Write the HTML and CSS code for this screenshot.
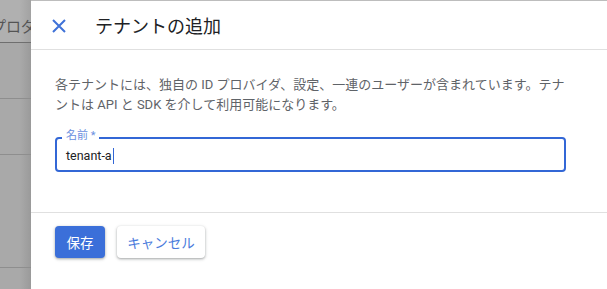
FILE: index.html
```html
<!DOCTYPE html>
<html lang="ja">
<head>
<meta charset="utf-8">
<link rel="stylesheet" href="styles.css">
</head>
<body>
<div class="page">
  <div class="backdrop">
    <div class="bg-head"><span class="bg-title">プロダ</span></div>
    <div class="bg-row"></div>
    <div class="bg-row"></div>
    <div class="bg-row tall"></div>
  </div>
  <div class="panel">
    <header class="panel-head">
      <button class="close" aria-label="閉じる">
        <svg width="14" height="14" viewBox="0 0 14 14"><path d="M1 1L13 13M13 1L1 13" stroke="#3f72d8" stroke-width="2" fill="none"/></svg>
      </button>
      <h1 class="title">テナントの追加</h1>
    </header>
    <div class="panel-body">
      <p class="desc">各テナントには、独自の ID プロバイダ、設定、一連のユーザーが含まれています。テナントは API と SDK を介して利用可能になります。</p>
      <div class="field">
        <span class="label">名前 *</span>
        <div class="input">tenant-a<span class="caret"></span></div>
      </div>
    </div>
    <footer class="panel-foot">
      <button class="btn primary">保存</button>
      <button class="btn secondary">キャンセル</button>
    </footer>
  </div>
</div>
</body>
</html>
```
FILE: styles.css
```css
* { box-sizing: border-box; }
html, body { margin: 0; padding: 0; background: #fff; }
body {
  font-family: Roboto, "Noto Sans CJK JP", sans-serif;
  width: 607px;
  height: 289px;
  overflow: hidden;
}
.page { display: flex; height: 289px; }
.backdrop {
  width: 31px;
  flex: none;
  background: linear-gradient(to right, #a9a9a9 0, #a9a9a9 20px, #9a9a9a 31px);
  display: flex;
  flex-direction: column;
  overflow: hidden;
}
.bg-head {
  height: 43px;
  border-bottom: 1px solid #6f6f6f;
  background: linear-gradient(to right, #b0b0b0 0, #b0b0b0 20px, #a2a2a2 31px);
  padding-top: 15px;
  white-space: nowrap;
}
.bg-title {
  font-size: 15px;
  color: #545454;
  margin-left: -9px;
}
.bg-row { height: 56px; border-bottom: 1px solid #8e8e8e; }
.bg-row.tall { height: 113px; }
.panel {
  flex: 1;
  background: #fff;
  display: flex;
  flex-direction: column;
  border-top: 1px solid #bdbdbd;
}
.panel-head {
  height: 49px;
  border-bottom: 1px solid #e0e0e0;
  display: flex;
  align-items: center;
  padding-left: 20px;
}
.close {
  background: none;
  border: 0;
  padding: 0;
  width: 16px;
  height: 16px;
  display: flex;
  align-items: center;
  justify-content: center;
  margin-top: 1px;
}
.title {
  margin: 0 0 0 28px;
  font-size: 18px;
  font-weight: 400;
  color: #202124;
}
.panel-body {
  height: 163px;
  border-bottom: 1px solid #e0e0e0;
  padding: 25px 40px 0 24px;
}
.desc {
  margin: 0;
  font-size: 13px;
  line-height: 20px;
  color: #5f6368;
}
.field { position: relative; margin-top: 22px; width: 511px; }
.label {
  position: absolute;
  left: 7px;
  top: -8px;
  background: #fff;
  padding: 0 4px;
  font-size: 11px;
  line-height: 14px;
  color: #6b90e0;
}
.input {
  height: 35px;
  border: 2px solid #3367d6;
  border-radius: 4px;
  padding: 2px 9px 0;
  font-size: 12.5px;
  line-height: 20px;
  color: #202124;
  display: flex;
  align-items: center;
}
.caret {
  display: inline-block;
  width: 1px;
  height: 16px;
  background: #3367d6;
  margin-left: 1px;
}
.panel-foot {
  display: flex;
  gap: 12px;
  padding: 13px 24px 0;
}
.btn {
  height: 32px;
  border: 0;
  border-radius: 4px;
  font-family: inherit;
  font-size: 13.5px;
  padding: 0;
  white-space: nowrap;
  box-shadow: 0 1px 2px rgba(60,64,67,.3), 0 1px 3px 1px rgba(60,64,67,.15);
}
.primary { width: 50px; background: #3b6fd9; color: #fff; }
.secondary { width: 88px; background: #fff; color: #4a7bdc; }
```
